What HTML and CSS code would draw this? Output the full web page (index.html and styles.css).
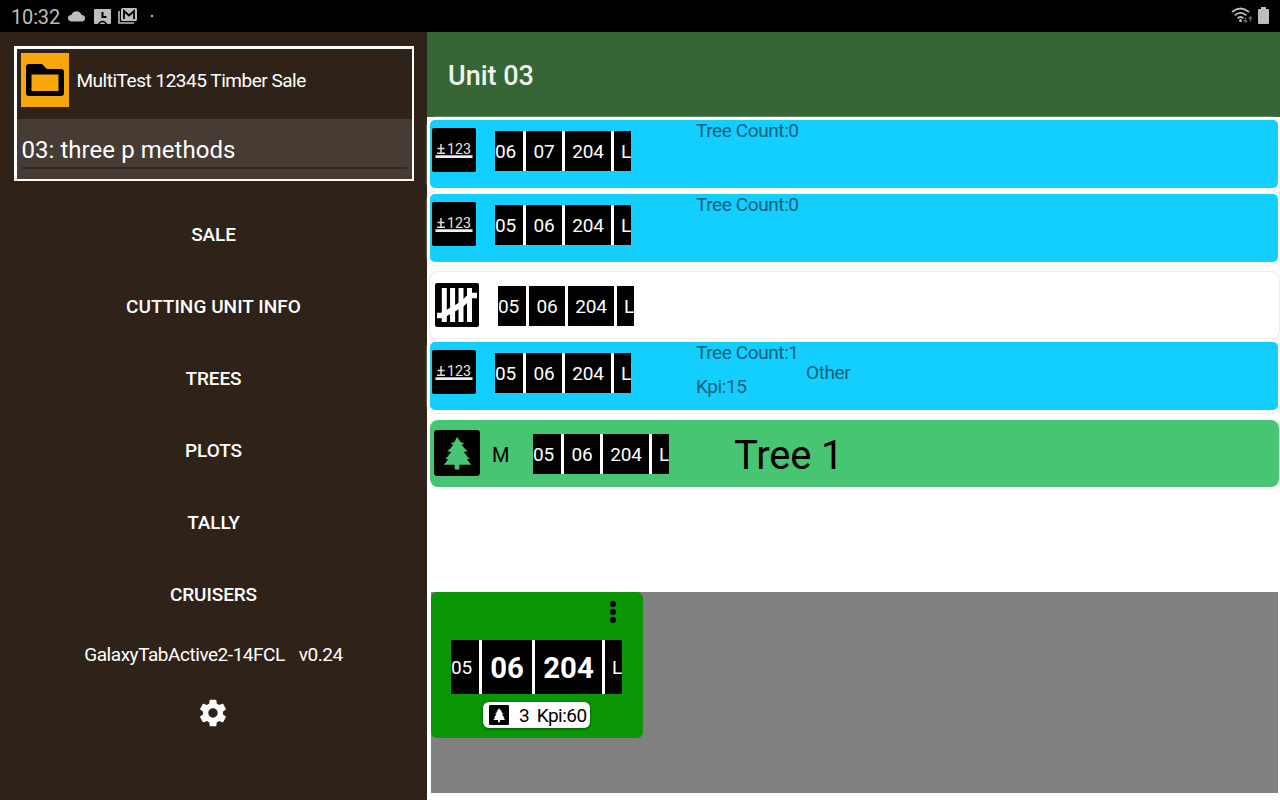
FILE: index.html
```html
<!DOCTYPE html>
<html lang="en">
<head>
<meta charset="utf-8">
<title>Unit 03</title>
<link rel="stylesheet" href="styles.css">
</head>
<body>
<svg class="defs" aria-hidden="true">
  <symbol id="count" viewBox="0 0 44 44">
    <rect width="44" height="44" rx="2"/>
    <path d="M5 25.300h8M9 16v9M5.500 20.500h7" stroke="#ddd" stroke-width="1.500"/>
    <text x="15" y="26" class="count-digits" textLength="24" lengthAdjust="spacingAndGlyphs">123</text>
    <path d="M3.500 28.600h37" stroke="#eee" stroke-width="2.800"/>
  </symbol>
  <symbol id="tally" viewBox="0 0 44 44">
    <rect width="44" height="44" rx="2"/>
    <path d="M9.300 5v34M17.600 5v34M26 5v34M34.500 5v34" stroke="#fff" stroke-width="5"/>
    <path d="M2 32.500h5L17 27L27 21L36 12.500h6" fill="none" stroke="#fff" stroke-width="5.500"/>
  </symbol>
  <symbol id="tree" viewBox="0 0 44 44">
    <path d="M22 6.800l3.500 4.700 3.500 1.500-2.500 1 3.500 4.500 2.500 1.500-4 1 4 5 2 1.500-3 .5 4 5.200H24.200v4.500h-4.400v-4.500H9.500l4-5.200-3-.5 2-1.500 4-5-4-1 2.500-1.500 3.500-4.500-2.500-1 3.500-1.500z"/>
  </symbol>
</svg>
<header class="status">
  <span class="clock">10:32</span>
  <svg class="cloud" width="18" height="12" viewBox="0 0 18 12"><path d="M3 11.500a3.200 3.200 0 0 1 .5-6.500A5.200 5.200 0 0 1 13.500 5a3.300 3.300 0 0 1 1 6.500z"/></svg>
  <svg class="contact" width="17" height="15" viewBox="0 0 17 15"><path d="M1 0h15q1 0 1 1v13q0 1-1 1h-2.500q-5-7-10 0H1q-1 0-1-1V1q0-1 1-1z"/><path d="M8.500 3v5h4" fill="none" stroke="#000" stroke-width="2"/><path d="M5.500 15q3-3.500 6 0z"/></svg>
  <svg class="mail" width="20" height="16" viewBox="0 0 20 16"><path d="M1 3v12h15" fill="none" stroke="#bdbdbd" stroke-width="1.600"/><rect x="3" width="16" height="13" rx="1.500"/><path d="M6 11V3l5 4.500L16 3v8" fill="none" stroke="#000" stroke-width="1.800"/></svg>
  <span class="dot"></span>
  <svg class="wifi" width="22" height="18" viewBox="0 0 22 18"><g fill="none" stroke="#bdbdbd" stroke-width="1.700"><path d="M1 5q8.500-7 17 0M3.700 8.300q5.800-5 11.600 0M6.500 11.300q3-2.600 6 0"/></g><circle cx="9.500" cy="13.500" r="1.500"/><path d="M14.500 10.500v4M12.800 13.500l1.700 1.700 1.700-1.700M19.500 14.500v-4M17.800 11.500l1.700-1.700 1.700 1.700" fill="none" stroke="#666" stroke-width="1.300"/></svg>
  <svg class="battery" width="11" height="17" viewBox="0 0 11 17"><path d="M3 0h5v2h2q1 0 1 1v13q0 1-1 1H1q-1 0-1-1V3q0-1 1-1h2z"/></svg>
</header>
<div class="app">
  <nav class="sidebar">
    <section class="sale">
      <div class="sale-head">
        <div class="folder"><svg width="48" height="54" viewBox="0 0 48 54"><path fill-rule="evenodd" d="M8 11h13l5 5h14q3 0 3 3v21q0 3-3 3H8q-3 0-3-3V14q0-3 3-3zM10.500 21.500V38h27V21.500z"/></svg></div>
        <span>MultiTest 12345 Timber Sale</span>
      </div>
      <div class="picker"><div class="picker-value">03: three p methods</div></div>
    </section>
    <a class="link">SALE</a>
    <a class="link">CUTTING UNIT INFO</a>
    <a class="link">TREES</a>
    <a class="link">PLOTS</a>
    <a class="link">TALLY</a>
    <a class="link">CRUISERS</a>
    <div class="device"><span>GalaxyTabActive2-14FCL</span><span>v0.24</span></div>
    <svg class="gear" width="32" height="32" viewBox="0 0 24 24"><path d="M19.430 12.980c.04-.32.070-.64.070-.98s-.03-.66-.07-.98l2.110-1.650c.19-.15.240-.42.120-.64l-2-3.460c-.12-.22-.39-.3-.61-.22l-2.490 1c-.52-.4-1.080-.73-1.690-.98l-.38-2.650C14.460 2.180 14.250 2 14 2h-4c-.25 0-.46.180-.49.420l-.38 2.650c-.61.250-1.170.590-1.690.980l-2.490-1c-.23-.09-.49 0-.61.220l-2 3.460c-.13.220-.07.490.12.640l2.110 1.650c-.04.320-.07.650-.07.980s.03.660.07.980l-2.110 1.650c-.19.150-.24.420-.12.640l2 3.460c.12.220.39.300.61.220l2.490-1c.52.400 1.080.730 1.690.980l.38 2.650c.03.240.24.420.49.420h4c.25 0 .46-.18.490-.42l.38-2.650c.61-.25 1.170-.59 1.690-.98l2.490 1c.23.090.49 0 .61-.22l2-3.460c.12-.22.070-.49-.12-.64l-2.110-1.650zM12 15.500c-1.930 0-3.500-1.570-3.500-3.500s1.570-3.500 3.500-3.500 3.500 1.570 3.500 3.500-1.570 3.500-3.500 3.500z"/></svg>
  </nav>
  <main class="main">
    <h1 class="title">Unit 03</h1>
    <div class="list">
      <div class="row framed"><div class="entry blue">
        <svg class="icon"><use href="#count"/></svg>
        <div class="chips"><b>06</b><b>07</b><b>204</b><b>L</b></div>
        <div class="counts"><span>Tree Count:0</span></div>
      </div></div>
      <div class="row framed"><div class="entry blue">
        <svg class="icon"><use href="#count"/></svg>
        <div class="chips"><b>05</b><b>06</b><b>204</b><b>L</b></div>
        <div class="counts"><span>Tree Count:0</span></div>
      </div></div>
      <div class="row card white">
        <svg class="icon"><use href="#tally"/></svg>
        <div class="chips"><b>05</b><b>06</b><b>204</b><b>L</b></div>
      </div>
      <div class="row framed"><div class="entry blue">
        <svg class="icon"><use href="#count"/></svg>
        <div class="chips"><b>05</b><b>06</b><b>204</b><b>L</b></div>
        <div class="counts"><span>Tree Count:1</span><span>Kpi:15</span></div>
        <span class="other">Other</span>
      </div></div>
      <div class="row card green">
        <svg class="icon tree-icon" viewBox="0 0 44 44"><rect width="44" height="44" rx="3"/><use href="#tree" fill="#47c572"/></svg>
        <span class="mark">M</span>
        <div class="chips"><b>05</b><b>06</b><b>204</b><b>L</b></div>
        <span class="tree-name">Tree 1</span>
      </div>
    </div>
    <div class="tray">
      <div class="tile">
        <svg class="more" width="8" height="24" viewBox="0 0 8 24"><circle cx="4" cy="4" r="3"/><circle cx="4" cy="12" r="3"/><circle cx="4" cy="20" r="3"/></svg>
        <div class="chips large"><b>05</b><b>06</b><b>204</b><b>L</b></div>
        <div class="badge">
          <svg width="20" height="20" viewBox="0 0 44 44"><rect width="44" height="44" rx="3"/><use href="#tree" fill="#fff"/></svg>
          <span>3</span><span>Kpi:60</span>
        </div>
      </div>
    </div>
  </main>
</div>
</body>
</html>
```
FILE: styles.css
```css
* { box-sizing: border-box; }
body {
  margin: 0;
  width: 1280px;
  height: 800px;
  overflow: hidden;
  display: flex;
  flex-direction: column;
  font: 19px/22px Roboto, sans-serif;
  background: #fff;
}
svg { display: block; flex: none; }
.defs { display: none; }
.count-digits { font: 400 15.5px Roboto, sans-serif; fill: #e4e4e4; }

.status {
  height: 32px;
  background: #000;
  color: #bdbdbd;
  display: flex;
  align-items: center;
  padding: 0 11px;
}
.status svg { fill: #bdbdbd; }
.clock { width: 57px; font-size: 20px; padding-top: 2px; letter-spacing: -0.15px; }
.status .cloud { margin-top: -1px; }
.contact { margin-left: 8px; }
.mail { margin-left: 7px; }
.dot { width: 2px; height: 2px; margin-left: 13px; background: #bdbdbd; }
.wifi { margin-left: auto; }
.battery { margin-left: 5px; margin-top: -2px; }

.app { flex: 1; display: flex; min-height: 0; }
.sidebar {
  width: 427px;
  background: #2f2319;
  color: #fff;
  display: flex;
  flex-direction: column;
  align-items: center;
  padding-top: 14px;
}
.sale {
  width: 400px;
  height: 135px;
  border: 3px solid #fff;
  border-right-width: 2px;
  border-bottom-width: 2px;
  display: flex;
  flex-direction: column;
  margin-bottom: 17px;
}
.sale-head { display: flex; align-items: center; gap: 8px; height: 70px; padding: 4px 4px 12px; letter-spacing: -0.48px; }
.sale-head span { padding-top: 1px; }
.folder { background: #f8a70a; height: 54px; }
.picker { flex: 1; background: #463c33; padding: 15px 5px 10px; }
.picker-value {
  height: 35px;
  border-bottom: 2px solid #2f2a20;
  font-size: 24px;
  line-height: 32px;
  letter-spacing: 0.05px;
}
.link { height: 72px; line-height: 73px; font-weight: 500; letter-spacing: 0.05px; }
.link:not(:nth-of-type(2)) { letter-spacing: -0.1px; }
.device { display: flex; gap: 14px; height: 48px; align-items: center; margin-top: 1px; letter-spacing: -0.46px; }
.gear { fill: #fff; margin: 18px 2px 0 0; }

.main { flex: 1; display: flex; flex-direction: column; min-width: 0; }
.title {
  margin: 0;
  height: 85px;
  padding: 2px 21px 0;
  line-height: 85px;
  font-size: 27px;
  font-weight: 500;
  background: #366636;
  color: #eef3ee;
}
.list { height: 475px; display: flex; flex-direction: column; }
.framed { height: 74px; padding: 3px 2px 3px 3px; border-radius: 9px; box-shadow: 0 0 2px #ccc; background: #fff; }
.entry { height: 68px; border-radius: 5px; display: flex; }
.blue { background: #12cfff; }
.icon { width: 44px; height: 44px; margin: 8px 0 0 2px; }
.entry .chips { margin: 11px 0 0 19px; }
.chips { display: flex; gap: 3px; background: #fff; width: 136px; height: 40px; line-height: 42px; overflow: hidden; letter-spacing: -0.25px; }
.chips b {
  flex: none;
  font-weight: 400;
  color: #fff;
  background: #000;
  text-align: center;
}
.chips b:nth-child(1) { width: 28px; text-align: left; }
.chips b:nth-child(2) { width: 36px; }
.chips b:nth-child(3) { width: 46px; }
.chips b:nth-child(4) { width: 17px; padding-left: 7px; text-align: left; }
.counts { margin-left: 65px; width: 110px; display: flex; flex-direction: column; gap: 12px; color: #0b617a; letter-spacing: -0.4px; }
.other { color: #0b617a; line-height: 62px; letter-spacing: -0.4px; }
.card { height: 67px; margin: 7px 1px 3px 3px; border-radius: 8px; display: flex; box-shadow: 0 0 2px #bbb; }
.card .icon { margin: 11px 0 0 5px; }
.card .chips { margin: 14px 0 0 19px; }
.white { background: #fff; margin-bottom: 0; }
.green { background: #47c572; box-shadow: none; }
.green .tree-icon { width: 46px; height: 46px; margin: 10px 0 0 4px; }
.mark { width: 21px; margin-left: 12px; line-height: 71px; font-size: 20px; }
.card .mark + .chips { margin-left: 20px; }
.tree-name { margin-left: 65px; line-height: 72px; font-size: 40px; letter-spacing: -0.2px; }

.tray { height: 201px; margin: 0 2px 0 4px; background: #808080; }
.tile { width: 212px; height: 146px; border-radius: 6px; background: #0a9605; display: flex; flex-direction: column; }
.more { margin: 8px 0 0 178px; }
.large { width: 171px; height: 54px; line-height: 56px; margin: 16px 0 0 20px; }
.large b:nth-child(2), .large b:nth-child(3) { font-size: 29.33px; font-weight: 700; letter-spacing: 0; }
.large b:nth-child(2) { width: 50px; }
.large b:nth-child(3) { width: 67px; }
.badge {
  width: 107px;
  height: 26px;
  margin: 8px 0 0 52px;
  padding: 1px 0 0 6px;
  border-radius: 6px;
  background: #fff;
  display: flex;
  align-items: center;
  box-shadow: 0 1px 3px #034d02;
}
.badge svg { margin-top: -2px; }
.badge span { margin-left: 10px; }
.badge span + span { margin-left: 7px; letter-spacing: -0.5px; }
```
